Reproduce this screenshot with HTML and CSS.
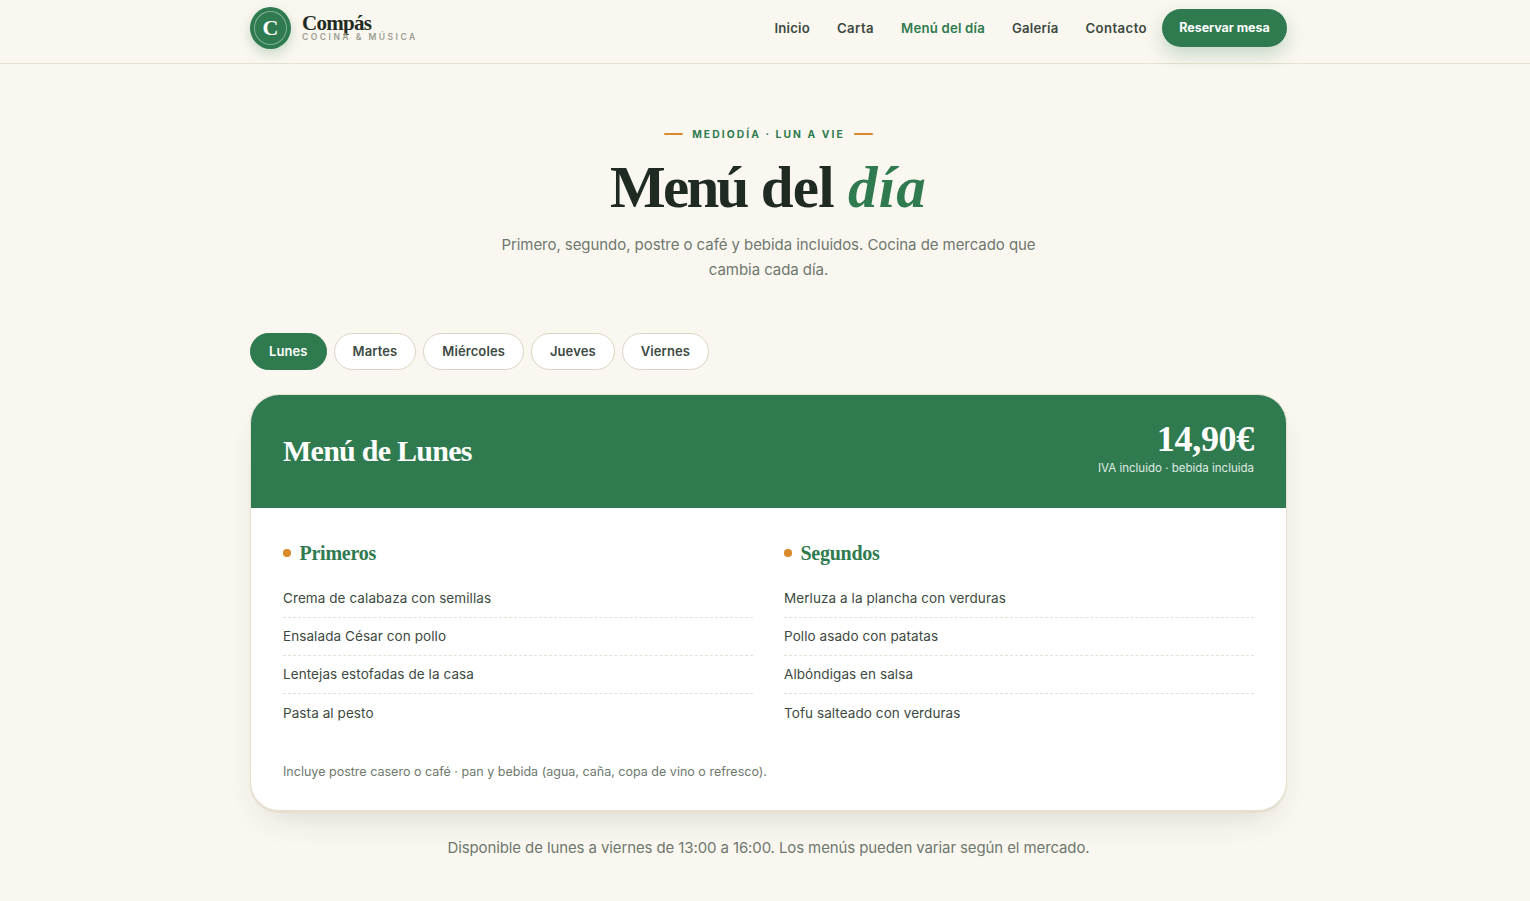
FILE: index.html
```html
<!DOCTYPE html>
<html lang="es">
<head>
  <meta charset="UTF-8">
  <title>Menú del día · Compás</title>
  <link rel="stylesheet" href="styles.css">
</head>
<body>

  <header class="header">
    <div class="container nav">
      <a class="brand" href="#">
        <span class="logo"><span class="logo-ring">C</span></span>
        <span class="brand-text">
          <span class="brand-name">Compás</span>
          <span class="brand-sub">COCINA &amp; MÚSICA</span>
        </span>
      </a>
      <nav class="links">
        <a href="#">Inicio</a>
        <a class="wide" href="#">Carta</a>
        <a class="active" href="#">Menú del día</a>
        <a href="#">Galería</a>
        <a class="wide" href="#">Contacto</a>
        <a class="btn" href="#">Reservar mesa</a>
      </nav>
    </div>
  </header>

  <main class="container">
    <section class="hero">
      <div class="eyebrow"><span>MEDIODÍA · LUN A VIE</span></div>
      <h1><span class="tight">Menú</span> del <em>día</em></h1>
      <p class="lead">Primero, segundo, postre o café y bebida incluidos. Cocina de mercado que<br>cambia cada día.</p>
    </section>

    <div class="tabs">
      <button class="tab on">Lunes</button>
      <button class="tab">Martes</button>
      <button class="tab">Miércoles</button>
      <button class="tab">Jueves</button>
      <button class="tab">Viernes</button>
    </div>

    <article class="card">
      <div class="card-head">
        <h2>Menú de Lunes</h2>
        <div class="price">
          <strong>14,90€</strong>
          <small>IVA incluido · bebida incluida</small>
        </div>
      </div>
      <div class="card-body">
        <div class="courses">
          <div class="course">
            <h3>Primeros</h3>
            <ul>
              <li>Crema de calabaza con semillas</li>
              <li>Ensalada César con pollo</li>
              <li>Lentejas estofadas de la casa</li>
              <li>Pasta al pesto</li>
            </ul>
          </div>
          <div class="course">
            <h3>Segundos</h3>
            <ul>
              <li>Merluza a la plancha con verduras</li>
              <li>Pollo asado con patatas</li>
              <li>Albóndigas en salsa</li>
              <li>Tofu salteado con verduras</li>
            </ul>
          </div>
        </div>
        <p class="note">Incluye postre casero o café · pan y bebida (agua, caña, copa de vino o refresco).</p>
      </div>
    </article>

    <p class="hours">Disponible de lunes a viernes de 13:00 a 16:00. Los menús pueden variar según el mercado.</p>
  </main>

</body>
</html>
```
FILE: styles.css
```css
:root {
  --green: #2f7b4f;
  --ink: #1f2a22;
  --text: #3d4a41;
  --muted: #6f786f;
  --line: #e6e0d0;
  --orange: #d98a29;
  --sans: Inter, "Open Sans", sans-serif;
  --serif: "Liberation Serif", serif;
}
* { box-sizing: border-box; margin: 0; padding: 0; }
html { overflow: hidden; background: #faf7f0; }
body {
  width: 1537px;
  height: 901px;
  background: #faf7f0;
  color: var(--text);
  font-family: var(--sans);
}
a { color: inherit; text-decoration: none; }
.container { width: 1037px; margin: 0 auto; }

/* header */
.header { height: 64px; border-bottom: 1px solid var(--line); }
.nav {
  display: flex;
  justify-content: space-between;
  align-items: center;
  height: 56px;
}
.brand { display: flex; align-items: center; gap: 11px; }
.logo {
  width: 41px;
  height: 42px;
  padding: 4px;
  border-radius: 50%;
  background: var(--green);
  box-shadow: 0 5px 12px rgba(47, 123, 79, .25);
}
.logo-ring {
  display: flex;
  align-items: center;
  justify-content: center;
  height: 100%;
  border: 1px solid rgba(255, 255, 255, .4);
  border-radius: 50%;
  color: #fff;
  font: bold 22px/1 var(--serif);
}
.brand-text { display: flex; flex-direction: column; margin-top: -2px; }
.brand-name {
  color: var(--ink);
  font: bold 21px/20px var(--serif);
  letter-spacing: -.7px;
}
.brand-sub {
  color: #9c9d91;
  font-size: 8.5px;
  font-weight: 600;
  line-height: 8px;
  letter-spacing: 2.5px;
}
.links {
  display: flex;
  align-items: center;
  gap: 27px;
  font-size: 13.2px;
  font-weight: 600;
  letter-spacing: .2px;
}
.links .wide { letter-spacing: .4px; }
.links .active { color: var(--green); }
.links .btn {
  width: 125px;
  height: 38px;
  margin-left: -12px;
  border-radius: 19px;
  background: var(--green);
  color: #fff;
  font-size: 12.5px;
  font-weight: 700;
  line-height: 38px;
  letter-spacing: -.05px;
  text-align: center;
  box-shadow: 0 8px 18px rgba(47, 123, 79, .25);
}

/* hero */
.hero { padding-top: 62px; text-align: center; }
.eyebrow {
  display: flex;
  justify-content: center;
  align-items: center;
  gap: 9px;
  height: 16px;
  color: var(--green);
  font-size: 10.3px;
  font-weight: 700;
  letter-spacing: 2.08px;
}
.eyebrow::before,
.eyebrow::after {
  content: "";
  width: 19px;
  height: 2px;
  border-radius: 1px;
  background: var(--orange);
}
h1 {
  margin-top: 15px;
  color: var(--ink);
  font: bold 59px/60px var(--serif);
  letter-spacing: -.7px;
}
h1 .tight { letter-spacing: -2.7px; }
h1 em { color: var(--green); letter-spacing: 1.2px; }
.lead {
  margin-top: 15px;
  color: var(--muted);
  font-size: 15px;
  line-height: 25px;
  letter-spacing: -.06px;
}

/* days */
.tabs { display: flex; gap: 7px; margin-top: 51px; }
.tab {
  height: 37px;
  padding: 0 18px;
  border: 1px solid #dcd5c3;
  border-radius: 19px;
  background: #fff;
  color: var(--text);
  font: 600 13px/35px var(--sans);
  letter-spacing: .1px;
}
.tab.on { border-color: var(--green); background: var(--green); color: #fff; }

/* menu card */
.card {
  height: 417px;
  margin-top: 24px;
  border: 1px solid var(--line);
  border-radius: 29px;
  background: #fff;
  overflow: hidden;
  box-shadow: 0 2px 0 var(--line), 0 16px 36px -16px rgba(31, 42, 34, .2);
}
.card-head {
  display: flex;
  justify-content: space-between;
  align-items: center;
  height: 113px;
  padding: 0 32px 2px;
  background: var(--green);
  color: #fff;
}
.card-head h2 { font: bold 30px/36px var(--serif); letter-spacing: -.75px; }
.price { display: flex; flex-direction: column; align-items: flex-end; }
.price strong { font: bold 36px/35px var(--serif); letter-spacing: -.3px; }
.price small {
  font-size: 11.5px;
  line-height: 22px;
  opacity: .85;
}
.card-body { padding: 32px; }
.courses { display: grid; grid-template-columns: 1fr 1fr; gap: 31px; }
.course h3 {
  display: flex;
  align-items: center;
  gap: 9px;
  height: 26px;
  margin-bottom: 14px;
  color: var(--green);
  font: bold 20px/26px var(--serif);
  letter-spacing: -.25px;
}
.course h3::before {
  content: "";
  width: 7.5px;
  height: 7.5px;
  border-radius: 50%;
  background: var(--orange);
}
.course ul { list-style: none; }
.course li {
  height: 38px;
  border-bottom: 1px dashed #e3e0d5;
  font-size: 13.5px;
  line-height: 36px;
  letter-spacing: .08px;
}
.course li:last-child { border-bottom: 0; line-height: 38px; }
.note {
  margin-top: 30px;
  color: var(--muted);
  font-size: 12.5px;
  line-height: 20px;
  letter-spacing: .01px;
}
.hours {
  margin-top: 24px;
  color: var(--muted);
  font-size: 15px;
  line-height: 25px;
  letter-spacing: -.11px;
  text-align: center;
}
```
